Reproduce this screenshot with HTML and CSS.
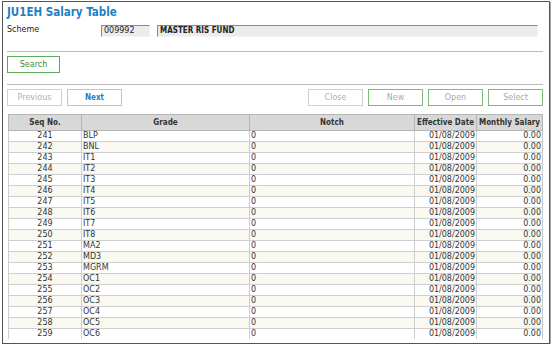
FILE: index.html
```html
<!DOCTYPE html>
<html>
<head>
<meta charset="utf-8">
<link rel="stylesheet" href="styles.css">
</head>
<body>
<div class="frame">
  <h1 class="title">JU1EH Salary Table</h1>
  <div class="scheme-row">
    <span class="label">Scheme</span>
    <span class="field code">009992</span>
    <span class="field name">MASTER RIS FUND</span>
  </div>
  <hr class="rule">
  <div class="btn-row search"><button class="btn green">Search</button></div>
  <hr class="rule">
  <div class="btn-row nav">
    <button class="btn disabled">Previous</button>
    <button class="btn next">Next</button>
    <span class="spacer"></span>
    <button class="btn disabled">Close</button>
    <button class="btn green light">New</button>
    <button class="btn green light">Open</button>
    <button class="btn green light">Select</button>
  </div>
  <table class="grid">
    <thead>
      <tr><th class="c-seq">Seq No.</th><th class="c-grade">Grade</th><th class="c-notch">Notch</th><th class="c-date">Effective Date</th><th class="c-sal">Monthly Salary</th></tr>
    </thead>
    <tbody>
      <tr><td class="seq">241</td><td>BLP</td><td>0</td><td class="num">01/08/2009</td><td class="num">0.00</td></tr>
      <tr><td class="seq">242</td><td>BNL</td><td>0</td><td class="num">01/08/2009</td><td class="num">0.00</td></tr>
      <tr><td class="seq">243</td><td>IT1</td><td>0</td><td class="num">01/08/2009</td><td class="num">0.00</td></tr>
      <tr><td class="seq">244</td><td>IT2</td><td>0</td><td class="num">01/08/2009</td><td class="num">0.00</td></tr>
      <tr><td class="seq">245</td><td>IT3</td><td>0</td><td class="num">01/08/2009</td><td class="num">0.00</td></tr>
      <tr><td class="seq">246</td><td>IT4</td><td>0</td><td class="num">01/08/2009</td><td class="num">0.00</td></tr>
      <tr><td class="seq">247</td><td>IT5</td><td>0</td><td class="num">01/08/2009</td><td class="num">0.00</td></tr>
      <tr><td class="seq">248</td><td>IT6</td><td>0</td><td class="num">01/08/2009</td><td class="num">0.00</td></tr>
      <tr><td class="seq">249</td><td>IT7</td><td>0</td><td class="num">01/08/2009</td><td class="num">0.00</td></tr>
      <tr><td class="seq">250</td><td>IT8</td><td>0</td><td class="num">01/08/2009</td><td class="num">0.00</td></tr>
      <tr><td class="seq">251</td><td>MA2</td><td>0</td><td class="num">01/08/2009</td><td class="num">0.00</td></tr>
      <tr><td class="seq">252</td><td>MD3</td><td>0</td><td class="num">01/08/2009</td><td class="num">0.00</td></tr>
      <tr><td class="seq">253</td><td>MGRM</td><td>0</td><td class="num">01/08/2009</td><td class="num">0.00</td></tr>
      <tr><td class="seq">254</td><td>OC1</td><td>0</td><td class="num">01/08/2009</td><td class="num">0.00</td></tr>
      <tr><td class="seq">255</td><td>OC2</td><td>0</td><td class="num">01/08/2009</td><td class="num">0.00</td></tr>
      <tr><td class="seq">256</td><td>OC3</td><td>0</td><td class="num">01/08/2009</td><td class="num">0.00</td></tr>
      <tr><td class="seq">257</td><td>OC4</td><td>0</td><td class="num">01/08/2009</td><td class="num">0.00</td></tr>
      <tr><td class="seq">258</td><td>OC5</td><td>0</td><td class="num">01/08/2009</td><td class="num">0.00</td></tr>
      <tr><td class="seq">259</td><td>OC6</td><td>0</td><td class="num">01/08/2009</td><td class="num">0.00</td></tr>
    </tbody>
  </table>
</div>
</body>
</html>
```
FILE: styles.css
```css
html, body { margin: 0; padding: 0; background: #fff; }
body { font-family: "DejaVu Sans", Verdana, sans-serif; font-size: 8px; color: #222; }
.frame {
  margin: 1px 0 0 2px;
  width: 548px;
  height: 343px;
  border: 1px solid #555;
  padding: 0 5px 0 4px;
  box-sizing: border-box;
  box-shadow: 1px 1px 0 #aaa;
  overflow: hidden;
}
.title {
  margin: 0;
  padding-top: 2px;
  font-family: "DejaVu Sans Condensed", "DejaVu Sans", sans-serif;
  font-stretch: condensed;
  font-size: 11.5px;
  font-weight: bold;
  color: #1f7fc4;
  line-height: 16px;
  height: 20px;
  box-sizing: border-box;
}
.scheme-row { display: flex; align-items: flex-start; height: 29px; }
.label { width: 94px; padding-top: 3px; }
.field {
  height: 12px;
  box-sizing: border-box;
  background: #ececec;
  border-top: 1px solid #888;
  border-left: 1px solid #888;
  border-right: 1px solid #f4f4f4;
  border-bottom: 1px solid #f4f4f4;
  padding-left: 2px;
  line-height: 10px;
  margin-top: 3px;
}
.code { width: 49px; margin-right: 7px; }
.name {
  width: 381px;
  font-family: "DejaVu Sans Condensed", "DejaVu Sans", sans-serif;
  font-stretch: condensed;
  font-weight: bold;
}
.rule { margin: 0; border: 0; border-top: 1px solid #bbb; height: 0; width: 536px; }
.btn-row { display: flex; gap: 5px; }
.search { padding: 4px 0 11px; }
.nav { padding: 4px 1px 8px 0; }
.spacer { flex: 1; }
.btn {
  font-family: inherit;
  font-size: 8px;
  width: 55px;
  height: 17px;
  background: #fff;
  border: 1px solid #ccc;
  padding: 0;
  color: #999;
}
.btn.green { border: 1px solid #5faa5f; color: #3a8a3a; width: 53px; }
.btn.green.light { color: #aaa; width: 55px; border-color: #7cbb7c; }
.btn.next {
  color: #2b7bc0;
  font-weight: bold;
  border-color: #c4c4c4;
  font-family: "DejaVu Sans Condensed", "DejaVu Sans", sans-serif;
  font-stretch: condensed;
}
.btn.disabled { color: #b0b0b0; border-color: #d0d0d0; }
.grid {
  border-collapse: collapse;
  width: 535px;
  margin-left: 1px;
  table-layout: fixed;
  border-left: 1px solid #888;
  border-right: 1px solid #c8c8c8;
}
.grid th {
  background: #d8d8d8;
  border: 1px solid #b5b5b5;
  height: 15px;
  padding: 0;
  font-family: "DejaVu Sans Condensed", "DejaVu Sans", sans-serif;
  font-stretch: condensed;
  font-weight: bold;
  text-align: center;
  color: #333;
  white-space: nowrap;
}
.grid td {
  height: 10px;
  line-height: 10px;
  padding: 0 1px;
  border-bottom: 1px solid #cfcfcf;
  border-left: 1px solid #cfcfcf;
  white-space: nowrap;
  overflow: hidden;
  color: #333;
}
.grid tbody tr:nth-child(even) td { background: #f9f9f1; }
.grid tbody tr:last-child td { border-bottom: 0; }
.c-seq { width: 72px; }
.c-grade { width: 167px; }
.c-notch { width: 164px; }
.c-date { width: 61px; }
.seq { text-align: center; }
.num { text-align: right; }
```
